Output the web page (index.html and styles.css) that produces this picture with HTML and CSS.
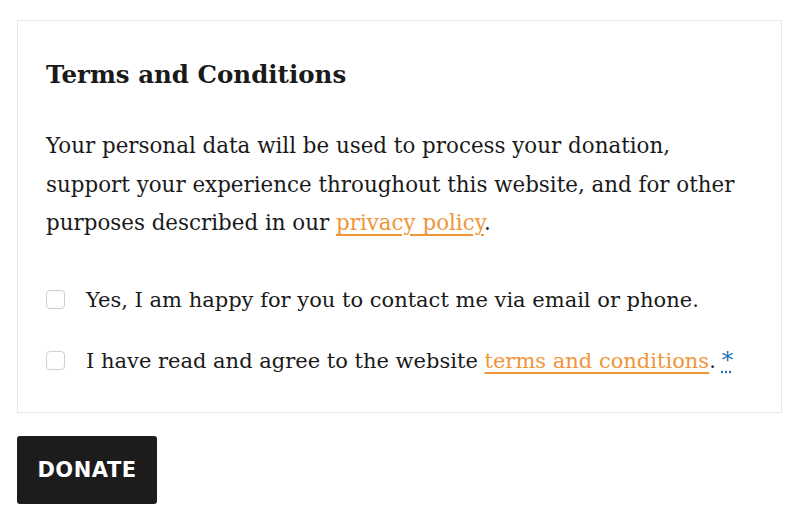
FILE: index.html
```html
<!DOCTYPE html>
<html lang="en">
<head>
  <meta charset="UTF-8">
  <meta name="viewport" content="width=device-width, initial-scale=1.0">
  <title>Donation Terms</title>
  <link rel="stylesheet" href="styles.css">
</head>
<body>

  <form class="donation-form">
    <fieldset class="terms">
      <h2 class="terms-title">Terms and Conditions</h2>
      <p class="terms-text">Your personal data will be used to process your donation, support your experience throughout this website, and for other purposes described in our <a href="#" class="link">privacy policy</a>.</p>

      <label class="check-row">
        <input type="checkbox" class="check">
        <span>Yes, I am happy for you to contact me via email or phone.</span>
      </label>
      <label class="check-row">
        <input type="checkbox" class="check">
        <span>I have read and agree to the website <a href="#" class="link">terms and conditions</a>.<abbr class="required" title="required">*</abbr></span>
      </label>
    </fieldset>

    <button type="button" class="donate">Donate</button>
  </form>

</body>
</html>
```

FILE: styles.css
```css
body {
  font-family: 'DejaVu Serif', serif;
  color: #1a1a1a;
  background: #fff;
  margin: 0;
  padding: 20px 20px 0 17px;
}
.terms {
  border: 1px solid #e6e6e6;
  margin: 0;
  padding: 32px 28px 21px 28px;
  width: 707px;
}
.terms-title {
  font-size: 24.5px;
  font-weight: bold;
  margin: 0 0 30px;
  line-height: 44px;
}
.terms-text {
  font-size: 21.4px;
  line-height: 38.5px;
  margin: 0 0 27px;
  max-width: 690px;
}
.link {
  color: #f0953a;
  text-decoration: underline;
  text-underline-offset: 4px;
}
.check-row {
  display: flex;
  align-items: center;
  gap: 21px;
  font-size: 21px;
  line-height: 38px;
  padding: 11px 0;
}
.check {
  appearance: none;
  width: 19px;
  height: 19px;
  margin: 0;
  border: 1px solid #cfcfcf;
  border-radius: 4px;
  background: #fff;
  flex-shrink: 0;
}
.required {
  color: #2271b1;
  font-size: 23px;
  margin-left: 6px;
  text-decoration: underline dotted;
  text-underline-offset: 4px;
}
.donate {
  margin-top: 23px;
  width: 140px;
  height: 68px;
  background: #1c1c1c;
  color: #fff;
  border: none;
  border-radius: 3px;
  font-family: 'DejaVu Sans', sans-serif;
  font-weight: bold;
  font-size: 21px;
  text-transform: uppercase;
  letter-spacing: 0.5px;
  cursor: pointer;
}
```
